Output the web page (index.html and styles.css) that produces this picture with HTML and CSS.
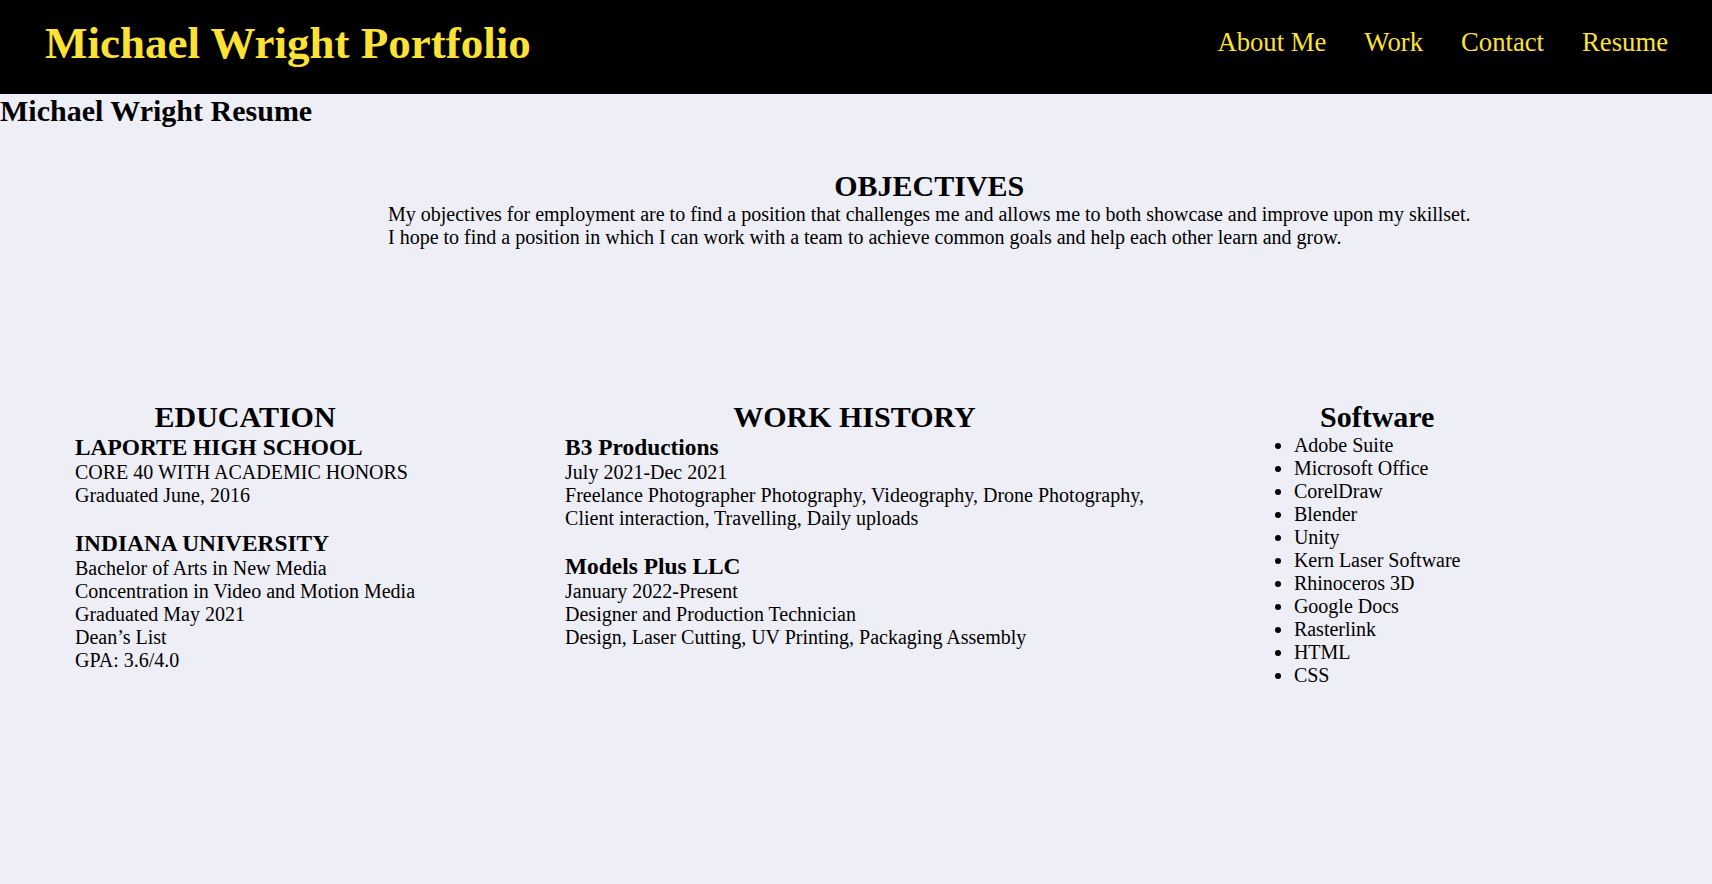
FILE: index.html
```html
<!DOCTYPE html>
<html lang="en">
<head>
<meta charset="utf-8">
<title>Michael Wright Resume</title>
<link rel="stylesheet" href="styles.css">
</head>
<body>
<header class="site-header">
  <h1 class="site-title">Michael Wright Portfolio</h1>
  <nav class="site-nav">
    <a href="#">About Me</a>
    <a href="#">Work</a>
    <a href="#">Contact</a>
    <a href="#">Resume</a>
  </nav>
</header>
<main>
  <h2 class="page-title">Michael Wright Resume</h2>
  <section class="objectives">
    <div class="block">
      <h2 class="section-title">OBJECTIVES</h2>
      <p>My objectives for employment are to find a position that challenges me and allows me to both showcase and improve upon my skillset.<br>I hope to find a position in which I can work with a team to achieve common goals and help each other learn and grow.</p>
    </div>
  </section>
  <section class="columns">
    <div class="block">
      <h2 class="section-title">EDUCATION</h2>
      <div class="entry">
        <h3>LAPORTE HIGH SCHOOL</h3>
        <p>CORE 40 WITH ACADEMIC HONORS<br>Graduated June, 2016</p>
      </div>
      <div class="entry">
        <h3>INDIANA UNIVERSITY</h3>
        <p>Bachelor of Arts in New Media<br>Concentration in Video and Motion Media<br>Graduated May 2021<br>Dean’s List<br>GPA: 3.6/4.0</p>
      </div>
    </div>
    <div class="block">
      <h2 class="section-title">WORK HISTORY</h2>
      <div class="entry">
        <h3>B3 Productions</h3>
        <p>July 2021-Dec 2021<br>Freelance Photographer Photography, Videography, Drone Photography,<br>Client interaction, Travelling, Daily uploads</p>
      </div>
      <div class="entry">
        <h3>Models Plus LLC</h3>
        <p>January 2022-Present<br>Designer and Production Technician<br>Design, Laser Cutting, UV Printing, Packaging Assembly</p>
      </div>
    </div>
    <div class="block">
      <h2 class="section-title">Software</h2>
      <ul class="skills">
        <li>Adobe Suite</li>
        <li>Microsoft Office</li>
        <li>CorelDraw</li>
        <li>Blender</li>
        <li>Unity</li>
        <li>Kern Laser Software</li>
        <li>Rhinoceros 3D</li>
        <li>Google Docs</li>
        <li>Rasterlink</li>
        <li>HTML</li>
        <li>CSS</li>
      </ul>
    </div>
  </section>
</main>
</body>
</html>
```
FILE: styles.css
```css
html, body {
  margin: 0;
  padding: 0;
}
body {
  background: #eeeef6;
  color: #000;
  font-family: "Liberation Serif", "Times New Roman", serif;
  font-size: 20px;
  min-height: 884px;
}
.site-header {
  background: #000;
  height: 94px;
  padding: 0 44px 0 45px;
  display: flex;
  align-items: center;
  justify-content: space-between;
  box-sizing: border-box;
}
.site-title {
  margin: 0 0 6px 0;
  font-size: 45px;
  font-weight: bold;
  color: #fde236;
  line-height: 1.15;
}
.site-nav {
  display: flex;
  gap: 38px;
  margin-bottom: 10px;
}
.site-nav a {
  color: #fde236;
  text-decoration: none;
  font-size: 26.7px;
}
.page-title {
  margin: 0;
  font-size: 30px;
  line-height: 34.5px;
}
.section-title {
  margin: 0;
  font-size: 30px;
  line-height: 34px;
  text-align: center;
}
.block {
  width: fit-content;
}
.objectives {
  padding-left: 388px;
  margin-top: 40.5px;
}
.objectives p {
  margin: 0;
  line-height: 23px;
}
.columns {
  display: flex;
  align-items: flex-start;
  gap: 150px;
  padding-left: 75px;
  margin-top: 151px;
}
.entry h3 {
  margin: 0;
  font-size: 23.4px;
  line-height: 27px;
}
.entry p {
  margin: 0 0 23px 0;
  line-height: 23px;
}
.skills {
  margin: 0;
  padding: 0;
  line-height: 23px;
}
```
